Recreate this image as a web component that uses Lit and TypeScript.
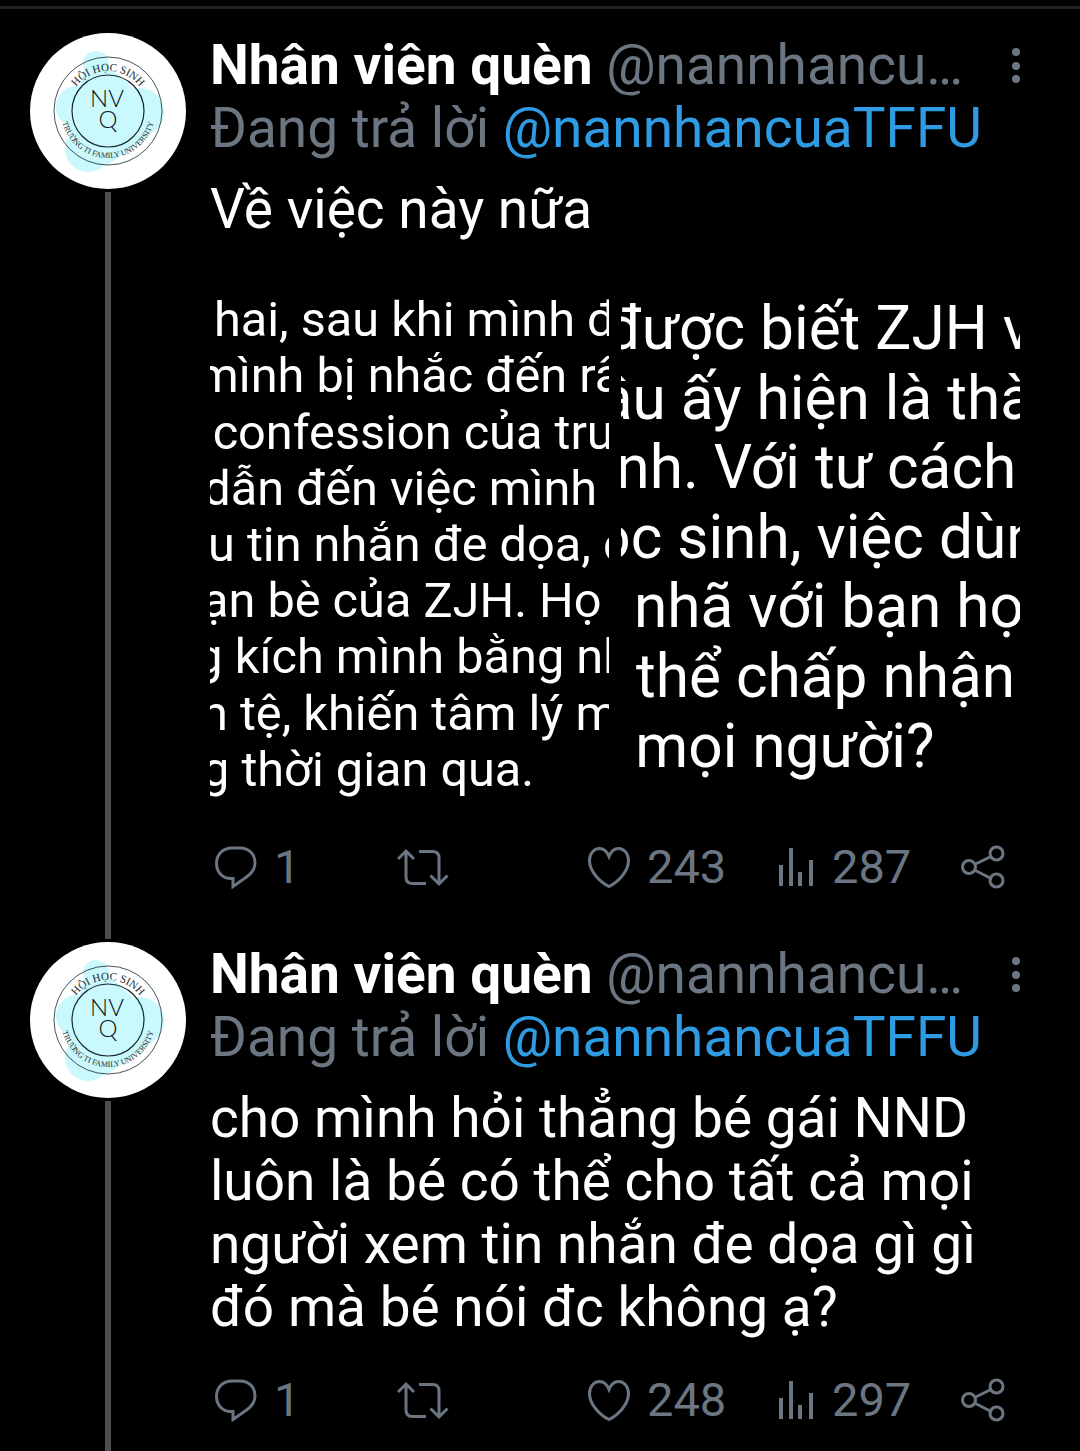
import { LitElement, html, svg, css } from "lit";
import { customElement, property } from "lit/decorators.js";

interface Line {
  x: number;
  y: number;
  text: string;
}

interface Photo {
  size: number;
  lines: Line[];
}

interface Tweet {
  id: string;
  name: string;
  handle: string;
  replyTo: string;
  text: string;
  photos: Photo[];
  replies: number;
  likes: number;
  views: number;
}

const TWEETS: Tweet[] = [
  {
    id: "t1",
    name: "Nhân viên quèn",
    handle: "@nannhancuaTFFU",
    replyTo: "@nannhancuaTFFU",
    text: "Về việc này nữa",
    photos: [
      {
        size: 146,
        lines: [
          { x: 12, y: 210, text: "hai, sau khi mình đ" },
          { x: -42, y: 378, text: "mình bị nhắc đến rấ" },
          { x: 8, y: 548, text: "confession của trư" },
          { x: -20, y: 716, text: "dẫn đến việc mình" },
          { x: -6, y: 886, text: "u tin nhắn đe dọa, c" },
          { x: -24, y: 1054, text: "ạn bè của ZJH. Họ" },
          { x: -44, y: 1222, text: "g kích mình bằng nh" },
          { x: -27, y: 1393, text: "n tệ, khiến tâm lý m" },
          { x: -24, y: 1561, text: "g thời gian qua." },
        ],
      },
      {
        size: 181,
        lines: [
          { x: -46, y: 249, text: "được biết ZJH v" },
          { x: -64, y: 458, text: "ậu ấy hiện là thà" },
          { x: -14, y: 667, text: "nh. Với tư cách" },
          { x: -74, y: 875, text: "ọc sinh, việc dùn" },
          { x: 39, y: 1084, text: "nhã với bạn họ" },
          { x: 45, y: 1292, text: "thể chấp nhận" },
          { x: 43, y: 1504, text: "mọi người?" },
        ],
      },
    ],
    replies: 1,
    likes: 243,
    views: 287,
  },
  {
    id: "t2",
    name: "Nhân viên quèn",
    handle: "@nannhancuaTFFU",
    replyTo: "@nannhancuaTFFU",
    text: "cho mình hỏi thẳng bé gái NND luôn là bé có thể cho tất cả mọi người xem tin nhắn đe dọa gì gì đó mà bé nói đc không ạ?",
    photos: [],
    replies: 1,
    likes: 248,
    views: 297,
  },
];

const icons = {
  reply: svg`<path d="M18 3h8c9.500 0 15 6.500 15 15 0 6.500-3.500 10.500-8.500 14L19 41.500V33.500h-2C8.500 33.500 2.500 27 2.500 18.500S8.500 3 18 3z"/>`,
  like: svg`<path d="M22 41.500C13 37 2.500 26.500 2.500 15.500 2.500 8.500 7 3.500 12.500 3.500c4.500 0 7.500 3 9.500 8 2-5 5-8 9.500-8 5.500 0 10 5 10 12 0 11-10.500 21.500-19.500 26z"/>`,
  retweet: svg`<path d="M1 14l8-8 8 8M9 6v26q0 6.500 6.500 6.500h13.500M22 6.500h13.500q6.500 0 6.500 6.500v25.500M33.500 30.500l8.500 8.500 8.500-8.500"/>`,
  share: svg`<path d="M13.500 19.500L31 11M13.500 25L31 34"/><circle cx="8" cy="22" r="6.500"/><circle cx="35.500" cy="8.500" r="6.500"/><circle cx="35.500" cy="35.500" r="6.500"/>`,
  views: svg`<path d="M3 20v21M13 3v38M22 27v14M33 15v26"/>`,
};

const iconWidths: Record<keyof typeof icons, number> = {
  reply: 44,
  like: 44,
  retweet: 54,
  share: 44,
  views: 38,
};

@customElement("school-badge")
export class SchoolBadge extends LitElement {
  static styles = css`
    :host {
      display: block;
    }
    .badge {
      display: block;
      width: 100%;
      border-radius: 50%;
      background: #fff;
    }
    .arc {
      font-family: "Liberation Serif", serif;
      fill: #1c2b2e;
      text-anchor: middle;
    }
    .top {
      font-size: 11px;
    }
    .bottom {
      font-size: 8px;
    }
    .mono {
      font-family: Lato, sans-serif;
      font-size: 24px;
      font-weight: 300;
      fill: #0c1517;
      text-anchor: middle;
    }
    .ring {
      fill: none;
      stroke: #15282c;
    }
  `;

  render() {
    return html`
      <svg class="badge" viewBox="0 0 156 156" role="img" aria-label="Hội học sinh NVQ">
        <defs>
          <path id="upper" d="M38 78a40 40 0 0 1 80 0" />
          <path id="lower" d="M31 78a47 47 0 0 0 94 0" />
        </defs>
        <g fill="#c9f8fd">
          <circle cx="66" cy="31" r="13" />
          <circle cx="110" cy="79" r="24" />
          <circle cx="58" cy="116" r="23" />
          <circle cx="47" cy="74" r="21" />
          <path d="M55 32C78 30 92 44 104 57L124 98 100 116 78 132 40 104 32 62 50 54z" />
        </g>
        <circle class="ring" cx="78" cy="78" r="54" stroke-width="0.800" />
        <circle class="ring" cx="78" cy="78" r="36" stroke-width="1.200" />
        <text class="arc top"><textPath href="#upper" startOffset="50%">HỘI HỌC SINH</textPath></text>
        <text class="arc bottom"><textPath href="#lower" startOffset="50%">TRƯỜNG TI FAMILY UNIVERSITY</textPath></text>
        <text class="mono" x="77" y="74">NV</text>
        <text class="mono" x="78" y="95">Q</text>
      </svg>
    `;
  }
}

@customElement("tweet-item")
export class TweetItem extends LitElement {
  @property({ attribute: false }) tweet!: Tweet;
  @property({ type: Boolean }) first = false;

  static styles = css`
    :host {
      display: flex;
      gap: 24px;
      padding: 0 60px 0 30px;
      font-size: 55px;
      line-height: 63px;
      color: #fff;
    }
    .rail {
      flex: none;
      width: 156px;
      display: flex;
      flex-direction: column;
      align-items: center;
      gap: 3px;
    }
    .lead,
    .trail {
      width: 6px;
      background: #4d4d4d;
    }
    .lead {
      height: 21px;
    }
    .lead.hidden {
      background: none;
    }
    .trail {
      flex: 1;
    }
    .avatar {
      display: block;
      width: 156px;
    }
    .content {
      flex: 1;
      min-width: 0;
      padding: 25px 0 24px;
    }
    .head {
      display: flex;
      align-items: center;
    }
    .who {
      flex: 1;
      min-width: 0;
      overflow: hidden;
      text-overflow: ellipsis;
      white-space: nowrap;
      margin: 0 40px 0 0;
      font-size: 55px;
      font-weight: 400;
      color: #6b7682;
    }
    .name {
      font-weight: 700;
      color: #fff;
    }
    .more {
      flex: none;
      border: 0;
      padding: 0;
      margin: 0;
      background: none;
      color: #6b7682;
      height: 40px;
      display: flex;
    }
    .replying {
      margin: 0;
      color: #6b7682;
      white-space: nowrap;
    }
    .mention {
      color: #2f9be3;
      text-decoration: none;
    }
    .body {
      margin: 0;
      padding: 18px 0 20px;
    }
    .media {
      display: grid;
      grid-template-columns: 1fr 1fr;
      gap: 12px;
      padding-top: 5px;
    }
    .photo {
      display: block;
      width: 100%;
      fill: #fff;
      overflow: hidden;
    }
    .actions {
      display: grid;
      grid-template-columns: 183fr 190fr 191fr 183fr 63fr;
      padding-top: 14px;
    }
    .action {
      display: flex;
      align-items: center;
      gap: 16px;
      height: 54px;
      border: 0;
      padding: 0 0 0 4px;
      background: none;
      color: #6b7682;
      font: inherit;
      font-size: 47px;
      line-height: 54px;
    }
    .icon {
      flex: none;
      fill: none;
      stroke: currentColor;
      stroke-width: 3;
    }
    .views .icon {
      stroke-width: 4;
    }
  `;

  private action(kind: keyof typeof icons, label: string, count?: number) {
    const width = iconWidths[kind];
    return html`
      <button class="action ${kind}" type="button" aria-label=${label}>
        <svg class="icon" width=${width} height="44" viewBox="0 0 ${width} 44">${icons[kind]}</svg>
        ${count === undefined ? "" : html`<span>${count}</span>`}
      </button>
    `;
  }

  private photo(p: Photo) {
    return html`
      <svg class="photo" viewBox="0 0 1197 1680">
        ${p.lines.map((l) => svg`<text x=${l.x} y=${l.y} font-size=${p.size}>${l.text}</text>`)}
      </svg>
    `;
  }

  render() {
    const t = this.tweet;
    return html`
      <div class="rail">
        <div class="lead ${this.first ? "hidden" : ""}"></div>
        <a class="avatar" href="#profile" aria-label=${t.name}><school-badge></school-badge></a>
        <div class="trail"></div>
      </div>
      <article class="content">
        <header class="head">
          <h2 class="who"><span class="name">${t.name}</span> ${t.handle}</h2>
          <button class="more" type="button" aria-label="Thêm">
            <svg width="8" height="40" viewBox="0 0 8 40" fill="currentColor">
              <circle cx="4" cy="6" r="4" />
              <circle cx="4" cy="20" r="4" />
              <circle cx="4" cy="33" r="4" />
            </svg>
          </button>
        </header>
        <p class="replying">Đang trả lời <a class="mention" href="#reply">${t.replyTo}</a></p>
        <p class="body">${t.text}</p>
        ${t.photos.length ? html`<div class="media">${t.photos.map((p) => this.photo(p))}</div>` : ""}
        <div class="actions">
          ${this.action("reply", "Trả lời", t.replies)}
          ${this.action("retweet", "Tweet lại")}
          ${this.action("like", "Thích", t.likes)}
          ${this.action("views", "Lượt xem", t.views)}
          ${this.action("share", "Chia sẻ")}
        </div>
      </article>
    `;
  }
}

@customElement("app-root")
export class AppRoot extends LitElement {
  static styles = css`
    :host {
      display: block;
      min-height: 100vh;
      background: #000;
      font-family: Roboto, "Noto Sans", sans-serif;
    }
    .thread {
      padding-top: 6px;
    }
    .divider {
      height: 3px;
      margin: 0;
      border: 0;
      background: #202020;
    }
  `;

  render() {
    return html`
      <main class="thread">
        <hr class="divider" />
        ${TWEETS.map((t, i) => html`<tweet-item .tweet=${t} ?first=${i === 0}></tweet-item>`)}
      </main>
    `;
  }
}
